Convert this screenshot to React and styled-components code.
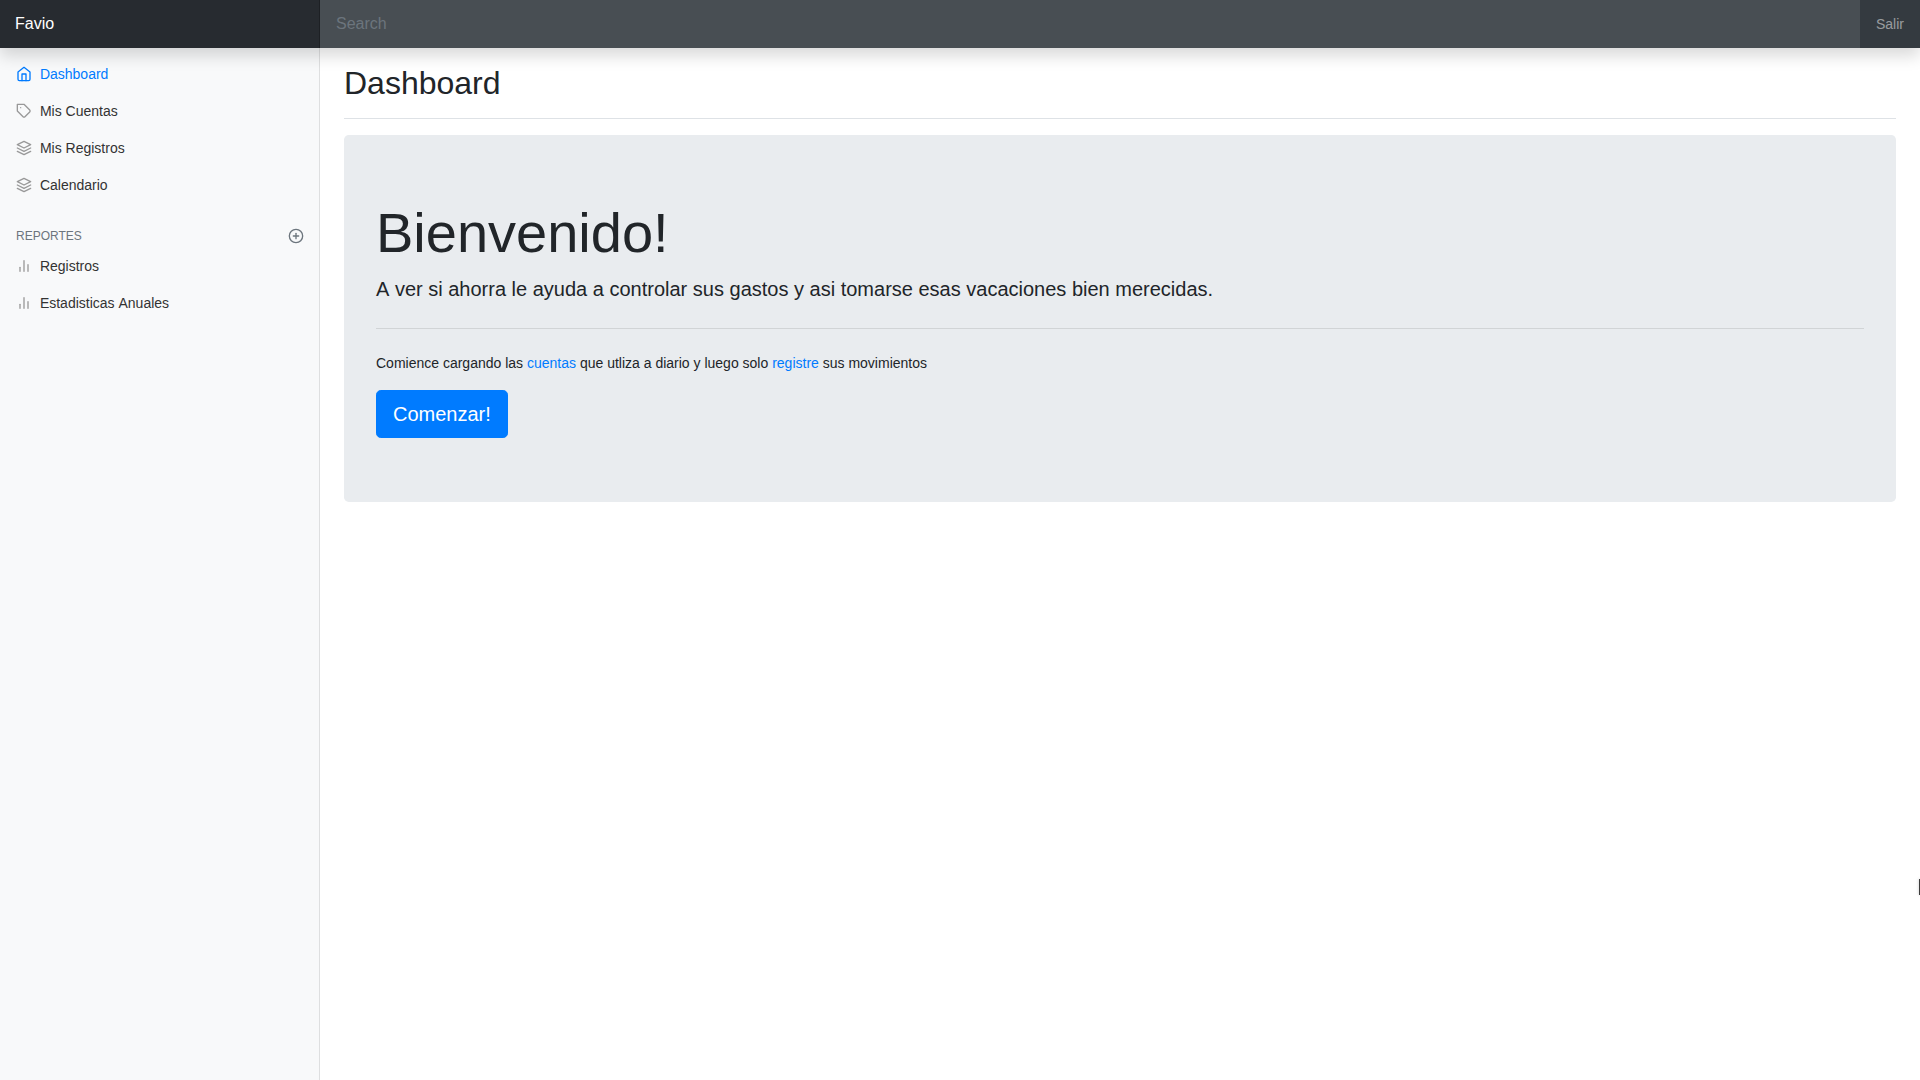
import React from "react";
import styled, { createGlobalStyle } from "styled-components";

const GlobalStyle = createGlobalStyle`
  *, *::before, *::after { box-sizing: border-box; }
  body {
    margin: 0;
    background: #fff;
    color: #212529;
    font-family: "Liberation Sans", Arial, sans-serif;
    font-size: 14px;
    line-height: 1.5;
    overflow: hidden;
  }
`;

const Page = styled.div`
  display: flex;
  flex-direction: column;
  height: 100vh;
`;

const Navbar = styled.nav`
  position: relative;
  z-index: 10;
  display: flex;
  flex: 0 0 48px;
  background: #343a40;
  box-shadow: 0 8px 16px rgba(0, 0, 0, 0.15);
`;

const Brand = styled.a`
  flex: 0 0 320px;
  padding: 12px 15px;
  font-size: 16px;
  line-height: 24px;
  color: #fff;
  background: rgba(0, 0, 0, 0.25);
  box-shadow: inset -1px 0 0 rgba(0, 0, 0, 0.25);
`;

const Search = styled.input`
  flex: 1;
  min-width: 0;
  height: 48px;
  padding: 12px 16px;
  border: 0;
  outline: 0;
  font: 16px/24px "Liberation Sans", Arial, sans-serif;
  color: #fff;
  background: rgba(255, 255, 255, 0.1);
  &::placeholder {
    color: #6c757d;
    opacity: 1;
  }
`;

const SignOut = styled.a`
  display: flex;
  align-items: center;
  padding: 0 16px;
  color: rgba(255, 255, 255, 0.5);
`;

const Body = styled.div`
  display: flex;
  flex: 1;
  min-height: 0;
`;

const Sidebar = styled.aside`
  flex: 0 0 320px;
  padding-top: 8px;
  background: #f8f9fa;
  box-shadow: inset -1px 0 0 rgba(0, 0, 0, 0.1);
`;

const NavList = styled.ul`
  margin: 0;
  padding: 0;
  list-style: none;
`;

const NavLink = styled.a`
  display: block;
  padding: 8px 16px;
  font-weight: 500;
  color: ${(p) => (p.$active ? "#007bff" : "#333")};
  svg {
    margin-right: 4px;
    color: ${(p) => (p.$active ? "inherit" : "#999")};
  }
`;

const Glyph = styled.svg`
  width: 16px;
  height: 16px;
  vertical-align: text-bottom;
  fill: none;
  stroke: currentColor;
  stroke-width: 2;
  stroke-linecap: round;
  stroke-linejoin: round;
`;

const SectionHeading = styled.h6`
  display: flex;
  align-items: center;
  justify-content: space-between;
  margin: 24px 0 4px;
  padding: 0 16px;
  font-size: 12px;
  font-weight: 500;
  line-height: 14px;
  text-transform: uppercase;
  color: #6c757d;
`;

const Main = styled.main`
  flex: 1;
  min-width: 0;
  padding: 0 24px;
`;

const TitleBar = styled.header`
  margin-bottom: 16px;
  padding: 16px 0 8px;
  border-bottom: 1px solid #dee2e6;
`;

const Title = styled.h1`
  margin: 0 0 8px;
  font-size: 32px;
  font-weight: 500;
  line-height: 38px;
`;

const Jumbotron = styled.section`
  padding: 64px 32px;
  border-radius: 4.8px;
  background: #e9ecef;
`;

const Welcome = styled.h2`
  margin: 0 0 8px;
  font-size: 56px;
  font-weight: 300;
  line-height: 67px;
`;

const Lead = styled.p`
  margin: 0 0 16px;
  font-size: 20px;
  font-weight: 300;
`;

/* Shapes the word on its own, so a capital A is not kerned into the space beside it. */
const Unkerned = styled.span`
  display: inline-block;
`;

const Divider = styled.hr`
  margin: 24px 0;
  border: 0;
  border-top: 1px solid rgba(0, 0, 0, 0.1);
`;

const Hint = styled.p`
  margin: 0 0 16px;
`;

const TextLink = styled.a`
  color: #007bff;
`;

const PrimaryButton = styled.a`
  display: inline-block;
  padding: 8px 16px;
  border: 1px solid #007bff;
  border-radius: 4.8px;
  font-size: 20px;
  line-height: 1.5;
  color: #fff;
  background: #007bff;
  vertical-align: middle;
`;

const EdgeHandle = styled.div`
  position: fixed;
  right: 0;
  top: 879px;
  width: 1px;
  height: 16px;
  background: #3c3c3c;
  box-shadow: 0 0 3px rgba(0, 0, 0, 0.35);
`;

const shapes = {
  home: (
    <>
      <path d="M3 9l9-7 9 7v11a2 2 0 0 1-2 2H5a2 2 0 0 1-2-2z" />
      <polyline points="9 22 9 12 15 12 15 22" />
    </>
  ),
  tag: (
    <>
      <path d="M20.59 13.41l-7.17 7.17a2 2 0 0 1-2.83 0L2 12V2h10l8.59 8.59a2 2 0 0 1 0 2.82z" />
      <line x1="7" y1="7" x2="7" y2="7" />
    </>
  ),
  layers: (
    <>
      <polygon points="12 2 2 7 12 12 22 7 12 2" />
      <polyline points="2 17 12 22 22 17" />
      <polyline points="2 12 12 17 22 12" />
    </>
  ),
  bars: (
    <>
      <line x1="18" y1="20" x2="18" y2="10" />
      <line x1="12" y1="20" x2="12" y2="4" />
      <line x1="6" y1="20" x2="6" y2="14" />
    </>
  ),
  plus: (
    <>
      <circle cx="12" cy="12" r="10" />
      <line x1="12" y1="8" x2="12" y2="16" />
      <line x1="8" y1="12" x2="16" y2="12" />
    </>
  ),
};

const Icon = ({ name }) => <Glyph viewBox="0 0 24 24">{shapes[name]}</Glyph>;

const mainLinks = [
  { id: "home", icon: "home", label: "Dashboard", active: true },
  { id: "accounts", icon: "tag", label: "Mis Cuentas" },
  { id: "records", icon: "layers", label: "Mis Registros" },
  { id: "calendar", icon: "layers", label: "Calendario" },
];

const reportLinks = [
  { id: "report", icon: "bars", label: "Registros" },
  {
    id: "yearly",
    icon: "bars",
    label: (
      <>
        Estadisticas <Unkerned>Anuales</Unkerned>
      </>
    ),
  },
];

const Links = ({ items }) => (
  <NavList>
    {items.map((item) => (
      <li key={item.id}>
        <NavLink $active={item.active}>
          <Icon name={item.icon} /> {item.label}
        </NavLink>
      </li>
    ))}
  </NavList>
);

export default function App() {
  return (
    <Page>
      <GlobalStyle />
      <Navbar>
        <Brand>Favio</Brand>
        <Search type="text" placeholder="Search" />
        <SignOut>Salir</SignOut>
      </Navbar>
      <Body>
        <Sidebar>
          <Links items={mainLinks} />
          <SectionHeading>
            <span>Reportes</span>
            <a>
              <Icon name="plus" />
            </a>
          </SectionHeading>
          <Links items={reportLinks} />
        </Sidebar>
        <Main>
          <TitleBar>
            <Title>Dashboard</Title>
          </TitleBar>
          <Jumbotron>
            <Welcome>Bienvenido!</Welcome>
            <Lead>
              <Unkerned>A</Unkerned> ver si ahorra le ayuda a controlar sus gastos y asi tomarse esas
              vacaciones bien merecidas.
            </Lead>
            <Divider />
            <Hint>
              Comience cargando las <TextLink>cuentas</TextLink> que utliza a diario y luego solo{" "}
              <TextLink>registre</TextLink> sus movimientos
            </Hint>
            <PrimaryButton>Comenzar!</PrimaryButton>
          </Jumbotron>
        </Main>
      </Body>
      <EdgeHandle />
    </Page>
  );
}
